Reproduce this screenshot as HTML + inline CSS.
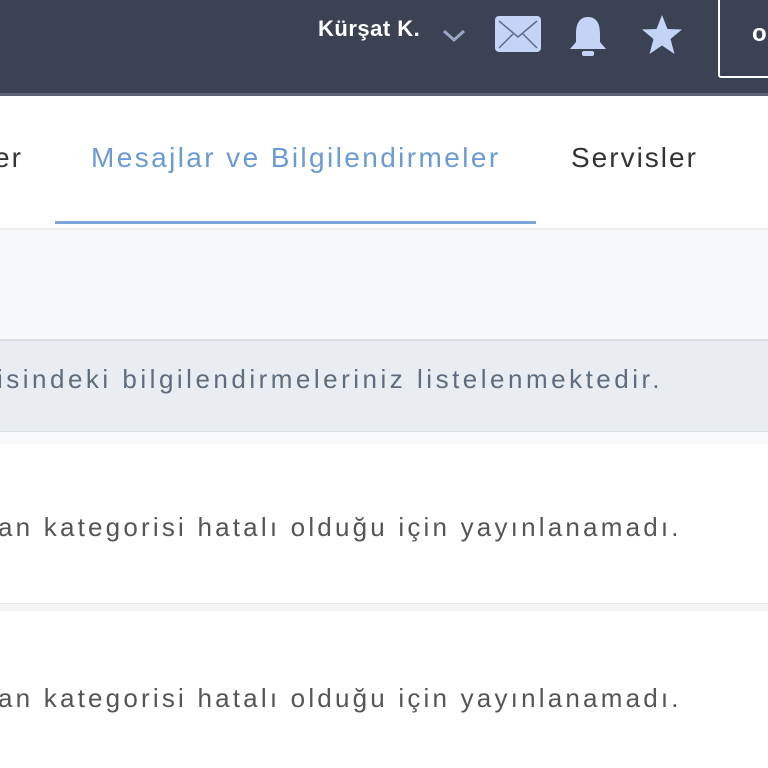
<!DOCTYPE html>
<html><head><meta charset="utf-8"><style>
body{margin:0;width:768px;height:768px;overflow:hidden;background:#fff;font-family:"Liberation Sans",sans-serif;position:relative}
.abs{position:absolute;white-space:nowrap}
</style></head><body>
<div class="abs" style="left:0;top:0;width:768px;height:93px;background:#3b4253"></div>
<div class="abs" style="left:0;top:93px;width:768px;height:3px;background:#5a6170"></div>
<div class="abs" style="left:318px;top:16px;color:#fff;font-weight:bold;font-size:22px;letter-spacing:0.5px">Kürşat K.</div>
<svg class="abs" style="left:441px;top:28px" width="26" height="16"><path d="M3 3 L13 12 L23 3" stroke="#9aa6c4" stroke-width="3" fill="none"/></svg>
<svg class="abs" style="left:494px;top:15px" width="48" height="38"><rect x="1" y="1" width="46" height="36" rx="4" fill="#c4d4f6"/><path d="M5 6 L24 22 L43 6 M5 33 L19 19 M43 33 L29 19" stroke="#5d6b8a" stroke-width="1.5" fill="none"/></svg>
<svg class="abs" style="left:566px;top:14px" width="44" height="44"><path d="M22 3 C12 3 10 12 10 20 L10 28 L4 35 L40 35 L34 28 L34 20 C34 12 32 3 22 3Z" fill="#c4d4f6"/><rect x="16" y="37" width="12" height="5" rx="2" fill="#c4d4f6"/></svg>
<svg class="abs" style="left:640px;top:14px" width="44" height="42"><path d="M22 1 L27.5 15 L42 15.5 L30.5 25 L34.5 40 L22 31.5 L9.5 40 L13.5 25 L2 15.5 L16.5 15Z" fill="#c4d4f6"/></svg>
<div class="abs" style="left:718px;top:-4px;width:60px;height:78px;border:2px solid #fff;border-radius:3px"></div>
<div class="abs" style="left:752px;top:20px;color:#fff;font-weight:bold;font-size:24px">o</div>
<div class="abs" style="left:-6px;top:142px;color:#333;font-size:28px;letter-spacing:2px">er</div>
<div class="abs" style="left:91px;top:142px;color:#6b9bd6;font-size:28px;letter-spacing:2.4px">Mesajlar ve Bilgilendirmeler</div>
<div class="abs" style="left:571px;top:142px;color:#333;font-size:28px;letter-spacing:2px">Servisler</div>
<div class="abs" style="left:55px;top:221px;width:481px;height:3px;background:#7ba6da"></div>
<div class="abs" style="left:0;top:228px;width:768px;height:112px;background:#f7f8fa;border-top:2px solid #eceef1"></div>
<div class="abs" style="left:0;top:339px;width:768px;height:90px;background:#e9edf2;border-top:2px solid #d8dde3;border-bottom:2px solid #d8dde3"></div>
<div class="abs" style="left:-3px;top:364px;color:#5e6d7e;font-size:26px;letter-spacing:3.5px">isindeki bilgilendirmeleriniz listelenmektedir.</div>
<div class="abs" style="left:0;top:432px;width:768px;height:12px;background:#f8f9fa"></div>
<div class="abs" style="left:-2px;top:512px;color:#555;font-size:26px;letter-spacing:3.2px">an kategorisi hatalı olduğu için yayınlanamadı.</div>
<div class="abs" style="left:0;top:603px;width:768px;height:7px;background:#f4f5f6;border-top:1px solid #e6e8ea"></div>
<div class="abs" style="left:-2px;top:683px;color:#555;font-size:26px;letter-spacing:3.2px">an kategorisi hatalı olduğu için yayınlanamadı.</div>
</body></html>
